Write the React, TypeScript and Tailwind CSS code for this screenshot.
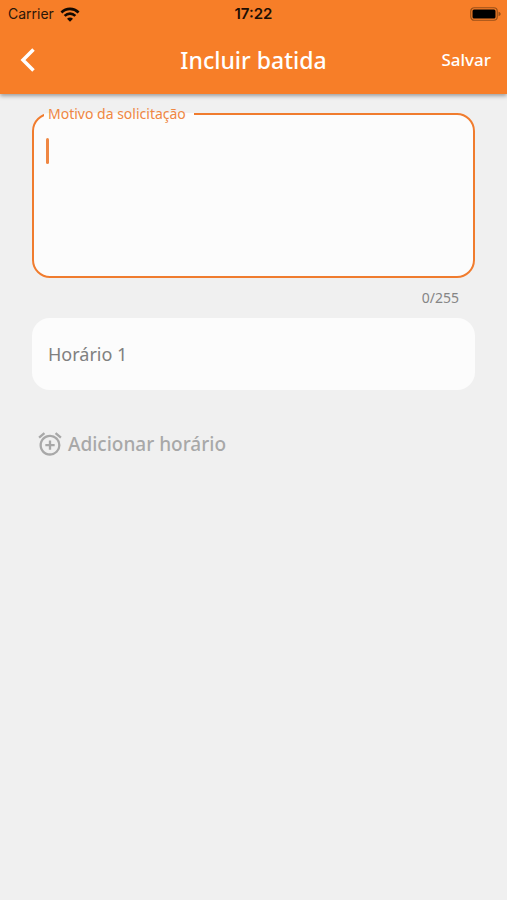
import { useState } from "react";
import { MdAddAlarm } from "react-icons/md";

const MAX_LENGTH = 255;

function StatusBar() {
  return (
    <div className="grid grid-cols-3 items-center h-7 px-1.5 font-['Inter',sans-serif] text-sm text-[#2b1608]">
      <div className="flex items-center gap-1.5 pl-0.5">
        <span>Carrier</span>
        <svg width="20" height="15" viewBox="0 0 18 14" fill="none" stroke="#140a02" strokeWidth="2.5">
          <path d="M1 5.1C5.5.7 12.500.7 17 5.1" />
          <path d="M4 8.300C6.900 5.500 11.100 5.500 14 8.300" />
          <path d="M9 13.700 6.200 10.900C7.800 9.400 10.200 9.400 11.800 10.900Z" fill="#140a02" stroke="none" />
        </svg>
      </div>
      <span className="text-center text-[15px] font-semibold text-[#1c0e04]">17:22</span>
      <svg className="justify-self-end" width="31" height="14" viewBox="0 0 31 14">
        <rect x="0.75" y="0.75" width="26.500" height="12.500" rx="3.500" fill="none" stroke="#9a5018" strokeWidth="1.200" />
        <rect x="2.500" y="2.500" width="23" height="9" rx="1.500" fill="#000" />
        <path d="M28.500 4.800c1.400.4 2.200 1.200 2.200 2.200s-.8 1.800-2.200 2.200z" fill="#9a5018" />
      </svg>
    </div>
  );
}

export default function App() {
  const [reason, setReason] = useState("");
  const [times, setTimes] = useState([""]);

  const handleTimeChange = (index: number, value: string) => {
    setTimes(times.map((t, i) => (i === index ? value : t)));
  };

  return (
    <div className="min-h-screen bg-[#f0f0f0] font-['Noto_Sans',sans-serif]">
      {/* Header */}
      <header className="bg-[#f77e28] pb-0.5 shadow-[0_2px_4px_rgba(0,0,0,0.35)]">
        <StatusBar />
        <div className="grid grid-cols-[1fr_auto_1fr] items-center h-16 px-4 text-white">
          <button type="button" aria-label="Voltar" className="justify-self-start p-1 cursor-pointer">
            <svg width="16" height="24" viewBox="0 0 16 24" fill="none" stroke="currentColor" strokeWidth="3.500">
              <path d="M13.500 1.500 3 12l10.500 10.500" />
            </svg>
          </button>
          <h1 className="text-[23px] font-medium">Incluir batida</h1>
          <button type="button" className="justify-self-end text-[17px] font-medium cursor-pointer">
            Salvar
          </button>
        </div>
      </header>

      <main className="px-8 pt-3">
        {/* Reason */}
        <fieldset className="relative rounded-[18px] border-2 border-[#f07c2e] bg-[#fcfcfc] pl-2.5 pr-2">
          <legend className="pl-1 pr-2 text-sm leading-4 text-[#ef8743]">
            <label htmlFor="reason">Motivo da solicitação</label>
          </legend>
          <textarea
            id="reason"
            maxLength={MAX_LENGTH}
            value={reason}
            onChange={(e) => setReason(e.target.value)}
            className="block w-full h-[154px] px-1 pt-2 resize-none outline-none text-lg text-gray-700 caret-[#ef7f34]"
          />
          {reason === "" && (
            <span className="absolute left-3 top-4 w-[3px] h-[26px] rounded-full bg-[#ef8743] pointer-events-none" />
          )}
        </fieldset>
        <p className="pt-2 pr-4 text-right text-sm leading-6 text-[#858585]">
          {reason.length}/{MAX_LENGTH}
        </p>

        {/* Times */}
        <div className="mt-2 space-y-4">
          {times.map((time, index) => (
            <input
              key={index}
              type="text"
              aria-label={`Horário ${index + 1}`}
              placeholder={`Horário ${index + 1}`}
              value={time}
              onChange={(e) => handleTimeChange(index, e.target.value)}
              className="block w-full h-18 px-4 rounded-[18px] bg-[#fcfcfc] text-lg text-gray-700 placeholder:text-[#808080] outline-none"
            />
          ))}
        </div>

        <button
          type="button"
          onClick={() => setTimes([...times, ""])}
          className="mt-10 ml-1 flex items-center gap-1 text-[19px] leading-7 font-medium text-[#a8a8a8] cursor-pointer"
        >
          <MdAddAlarm size={28} />
          Adicionar horário
        </button>
      </main>
    </div>
  );
}
